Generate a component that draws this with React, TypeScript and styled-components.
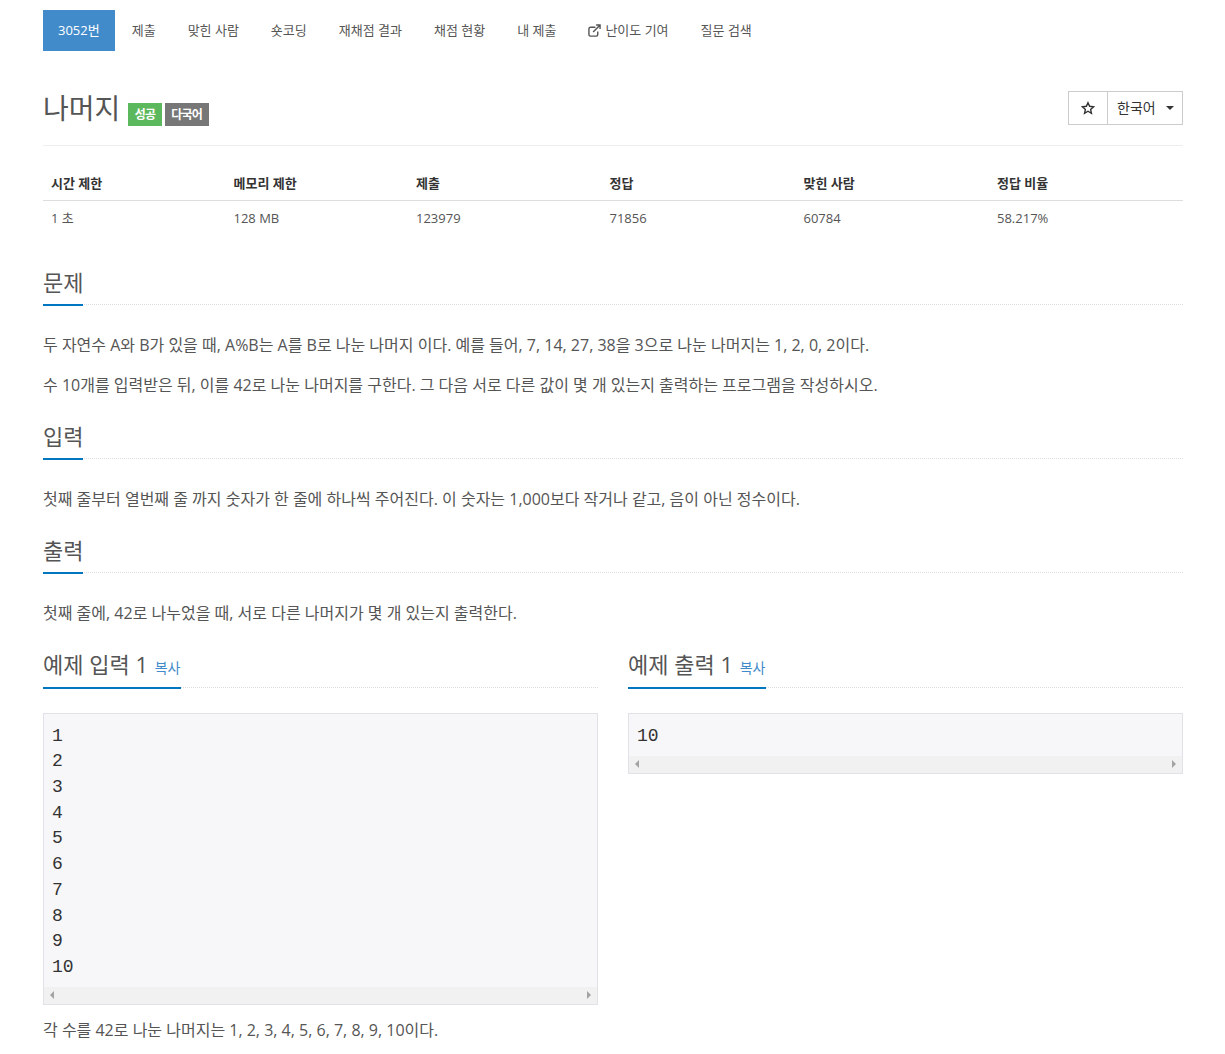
import React from "react";
import styled, { createGlobalStyle } from "styled-components";

const sans = `"Open Sans", "Noto Sans CJK KR", sans-serif`;

const GlobalStyle = createGlobalStyle`
  html, body {
    margin: 0;
    padding: 0;
    background: #fff;
  }
  body {
    font-family: ${sans};
    font-size: 14px;
    line-height: 1.42857;
    color: #555;
  }
  * {
    box-sizing: border-box;
  }
`;

const navItems = ["제출", "맞힌 사람", "숏코딩", "재채점 결과", "채점 현황", "내 제출"];

const limits = [
  { label: "시간 제한", value: "1 초", width: 182.5 },
  { label: "메모리 제한", value: "128 MB", width: 182.5 },
  { label: "제출", value: "123979", width: 193.5 },
  { label: "정답", value: "71856", width: 194 },
  { label: "맞힌 사람", value: "60784", width: 193.5 },
  { label: "정답 비율", value: "58.217%", width: 194 },
];

const sampleInput = ["1", "2", "3", "4", "5", "6", "7", "8", "9", "10"];

export default function App() {
  return (
    <>
      <GlobalStyle />
      <Container>
        <Nav>
          <NavItem $active>3052번</NavItem>
          {navItems.map((item) => (
            <NavItem key={item}>{item}</NavItem>
          ))}
          <NavItem>
            <ExternalIcon viewBox="0 0 14 14">
              <path d="M10.5 8v3.4a1.6 1.6 0 0 1-1.6 1.6H2.6A1.6 1.6 0 0 1 1 11.4V5.1a1.6 1.6 0 0 1 1.6-1.6H8" />
              <path d="M5.5 8.5 12.5 1.5M8.7 1h4.3v4.3" />
            </ExternalIcon>
            난이도 기여
          </NavItem>
          <NavItem>질문 검색</NavItem>
        </Nav>

        <PageHeader>
          <Title>나머지</Title>
          <Badge $color="#5cb85c">성공</Badge>
          <Badge $color="#777">다국어</Badge>
          <ButtonGroup>
            <StarButton>
              <svg width="14" height="14" viewBox="0 0 24 24" fill="none" stroke="#333" strokeWidth="2.4">
                <path d="M12 3l2.8 6.1 6.7.8-5 4.5 1.4 6.6-5.9-3.4-5.9 3.4 1.4-6.6-5-4.5 6.7-.8z" />
              </svg>
            </StarButton>
            <LangButton>
              한국어
              <Caret />
            </LangButton>
          </ButtonGroup>
        </PageHeader>

        <LimitTable>
          <thead>
            <tr>
              {limits.map((col) => (
                <th key={col.label} style={{ width: col.width }}>
                  {col.label}
                </th>
              ))}
            </tr>
          </thead>
          <tbody>
            <tr>
              {limits.map((col) => (
                <td key={col.label}>{col.value}</td>
              ))}
            </tr>
          </tbody>
        </LimitTable>

        <section>
          <Headline>
            <h2>문제</h2>
          </Headline>
          <SectionBody>
            <Paragraph>
              두 자연수 A와 B가 있을 때, A%B는 A를 B로 나눈 나머지 이다. 예를 들어, 7, 14, 27, 38을 3으로 나눈 나머지는 1, 2, 0, 2이다.
            </Paragraph>
            <Paragraph>
              수 10개를 입력받은 뒤, 이를 42로 나눈 나머지를 구한다. 그 다음 서로 다른 값이 몇 개 있는지 출력하는 프로그램을 작성하시오.
            </Paragraph>
          </SectionBody>
        </section>

        <section>
          <Headline>
            <h2>입력</h2>
          </Headline>
          <SectionBody>
            <Paragraph>
              첫째 줄부터 열번째 줄 까지 숫자가 한 줄에 하나씩 주어진다. 이 숫자는 1,000보다 작거나 같고, 음이 아닌 정수이다.
            </Paragraph>
          </SectionBody>
        </section>

        <section>
          <Headline>
            <h2>출력</h2>
          </Headline>
          <SectionBody>
            <Paragraph>첫째 줄에, 42로 나누었을 때, 서로 다른 나머지가 몇 개 있는지 출력한다.</Paragraph>
          </SectionBody>
        </section>

        <SampleRow>
          <SampleColumn>
            <SampleHeadline>
              <h2>
                예제 입력 1 <CopyLink>복사</CopyLink>
              </h2>
            </SampleHeadline>
            <SampleBox lines={sampleInput} />
          </SampleColumn>
          <SampleColumn>
            <SampleHeadline>
              <h2>
                예제 출력 1 <CopyLink>복사</CopyLink>
              </h2>
            </SampleHeadline>
            <SampleBox lines={["10"]} />
          </SampleColumn>
        </SampleRow>

        <Explain>각 수를 42로 나눈 나머지는 1, 2, 3, 4, 5, 6, 7, 8, 9, 10이다.</Explain>
      </Container>
    </>
  );
}

function SampleBox({ lines }: { lines: string[] }) {
  return (
    <Pre>
      <PreText>{lines.join("\n")}</PreText>
      <ScrollTrack>
        <ArrowLeft />
        <ArrowRight />
      </ScrollTrack>
    </Pre>
  );
}

const Container = styled.div`
  width: 1140px;
  margin-left: 43px;
  padding-top: 10px;
`;

const Nav = styled.div`
  display: flex;
  height: 41px;
`;

const NavItem = styled.div<{ $active?: boolean }>`
  display: flex;
  align-items: center;
  padding: 0 15px 1px ${(p) => (p.$active ? "15px" : "17px")};
  font-size: 13px;
  color: ${(p) => (p.$active ? "#fff" : "#555")};
  background: ${(p) => (p.$active ? "#428bca" : "transparent")};
`;

const ExternalIcon = styled.svg`
  width: 13px;
  height: 13px;
  margin-right: 4px;
  fill: none;
  stroke: #555;
  stroke-width: 1.5;
`;

const PageHeader = styled.div`
  display: flex;
  align-items: flex-end;
  height: 95px;
  margin-bottom: 19px;
  padding-bottom: 19px;
  border-bottom: 1px solid #eee;
`;

const Title = styled.h1`
  margin: 0 8px -2px 0;
  font-size: 28px;
  font-weight: 400;
  line-height: 40px;
  color: #555;
`;

const Badge = styled.span<{ $color: string }>`
  display: flex;
  align-items: center;
  height: 23px;
  margin-right: 3px;
  padding: 0 6.5px;
  font-size: 12px;
  font-weight: 700;
  letter-spacing: -0.8px;
  color: #fff;
  background: ${(p) => p.$color};
`;

const ButtonGroup = styled.div`
  display: flex;
  height: 34px;
  margin-bottom: 1px;
  margin-left: auto;
  border: 1px solid #ccc;
`;

const StarButton = styled.div`
  display: flex;
  align-items: center;
  justify-content: center;
  width: 39px;
  border-right: 1px solid #ccc;
`;

const LangButton = styled.div`
  display: flex;
  align-items: center;
  width: 74px;
  padding-left: 9px;
  font-size: 14px;
  color: #333;
`;

const Caret = styled.span`
  width: 0;
  height: 0;
  margin-left: 10px;
  border-top: 4px solid #333;
  border-left: 4px solid transparent;
  border-right: 4px solid transparent;
`;

const LimitTable = styled.table`
  width: 100%;
  margin-bottom: 32px;
  border-collapse: collapse;
  table-layout: fixed;
  font-size: 13px;

  th {
    height: 34px;
    padding: 9px 8px 7px;
    font-weight: 700;
    text-align: left;
    color: #333;
    border-bottom: 1px solid #ddd;
  }
  td {
    height: 35px;
    padding: 8px;
    color: #555;
  }
`;

const SectionBody = styled.div`
  padding: 4px 0 7px;
`;

const Headline = styled.div`
  display: flex;
  margin-bottom: 25px;
  border-bottom: 1px dotted #ddd;

  h2 {
    margin: 0 0 -2px;
    padding-bottom: 7px;
    font-size: 22px;
    font-weight: 400;
    line-height: 30px;
    color: #555;
    border-bottom: 2px solid #0076c0;
  }
`;

const SampleHeadline = styled(Headline)`
  h2 {
    padding-bottom: 8px;
  }
`;

const Paragraph = styled.p`
  margin: 0 0 17px;
  font-size: 16px;
  line-height: 23px;
  color: #555;
`;

const SampleRow = styled.div`
  display: grid;
  grid-template-columns: 555px 555px;
  column-gap: 30px;
  align-items: start;
`;

const SampleColumn = styled.div`
  min-width: 0;
`;

const CopyLink = styled.span`
  margin-left: 1px;
  padding-right: 1px;
  font-size: 14px;
  line-height: 1;
  color: #428bca;
`;

const Pre = styled.div`
  background: #f7f7f9;
  border: 1px solid #e1e1e8;
`;

const PreText = styled.pre`
  margin: 0;
  padding: 9.5px 8px 6.3px;
  font-family: "Liberation Mono", monospace;
  font-size: 18px;
  line-height: 25.7px;
  color: #333;
`;

const ScrollTrack = styled.div`
  display: flex;
  align-items: center;
  justify-content: space-between;
  height: 17px;
  padding: 0 6px;
  background: #f1f1f1;
`;

const ArrowLeft = styled.span`
  border-top: 4px solid transparent;
  border-bottom: 4px solid transparent;
  border-right: 4px solid #a3a3a3;
`;

const ArrowRight = styled.span`
  border-top: 4px solid transparent;
  border-bottom: 4px solid transparent;
  border-left: 4px solid #a3a3a3;
`;

const Explain = styled.p`
  margin: 14px 0 0;
  font-size: 16px;
  line-height: 23px;
  color: #555;
`;
